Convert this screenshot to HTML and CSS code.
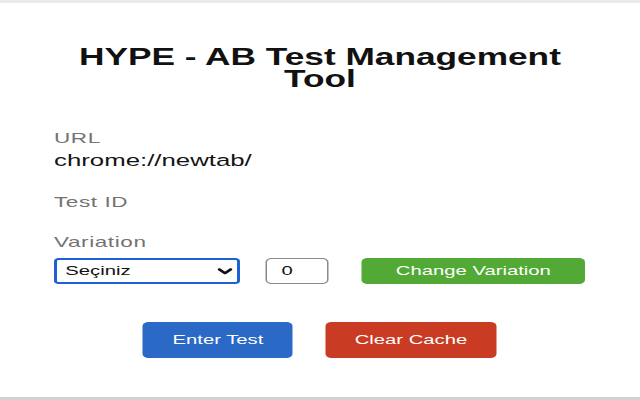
FILE: index.html
```html
<!DOCTYPE html>
<html lang="tr">
<head>
<meta charset="utf-8">
<title>HYPE - AB Test Management Tool</title>
<link rel="stylesheet" href="styles.css">
</head>
<body>
<div class="topbar"></div>
<main class="popup">
  <h1 class="title">HYPE - AB Test Management Tool</h1>
  <div class="label label-url">URL</div>
  <div class="value">chrome://newtab/</div>
  <div class="label label-test">Test ID</div>
  <div class="label label-var">Variation</div>
  <div class="var-row">
    <div class="select-box">
      <span class="select-text">Seçiniz</span>
      <svg class="chevron" width="10" height="7" viewBox="0 0 10 7"><path d="M1.2 1.4 L5 5.2 L8.8 1.4" fill="none" stroke="#111" stroke-width="2.2" stroke-linecap="round" stroke-linejoin="round"/></svg>
    </div>
    <div class="num-input">0</div>
    <button class="btn btn-green">Change Variation</button>
  </div>
  <div class="actions">
    <button class="btn btn-blue">Enter Test</button>
    <button class="btn btn-red">Clear Cache</button>
  </div>
</main>
<div class="bottombar"></div>
</body>
</html>
```

FILE: styles.css
```css
html, body {
  margin: 0;
  padding: 0;
  background: #ffffff;
  width: 640px;
  height: 400px;
  overflow: hidden;
  font-family: "Liberation Sans", Arial, sans-serif;
}

.topbar {
  height: 3px;
  background: #e9eaec;
}

.bottombar {
  height: 3px;
  background: #d2d2d2;
}

.popup {
  width: 426.667px;
  height: 394px;
  box-sizing: border-box;
  padding: 0 36px;
  transform: scaleX(1.5);
  transform-origin: 0 0;
  display: flex;
  flex-direction: column;
}

.title {
  margin: 43.4px 0 0;
  font-size: 23.5px;
  line-height: 22px;
  font-weight: 700;
  text-align: center;
  color: #111111;
}

.label {
  font-size: 15px;
  line-height: 20px;
  letter-spacing: 0.4px;
  color: #737373;
}

.label-url { margin-top: 37.6px; }
.label-test { margin-top: 22px; }
.label-var { margin-top: 20px; }

.value {
  margin-top: 2px;
  font-size: 17.2px;
  line-height: 20px;
  color: #141414;
}

.var-row {
  margin-top: 6px;
  height: 26px;
  display: flex;
  align-items: stretch;
}

.select-box {
  width: 124px;
  box-sizing: border-box;
  border: 2px solid #1c62d6;
  border-radius: 3px;
  display: flex;
  align-items: center;
  justify-content: space-between;
  padding: 0 3.5px 0 5.5px;
  font-size: 13.5px;
  color: #111;
}

.chevron {
  display: block;
  margin-top: 1px;
}

.num-input {
  width: 42.7px;
  margin-left: 16.7px;
  box-sizing: border-box;
  border: 1px solid #8a8a8a;
  border-radius: 4px;
  display: flex;
  align-items: center;
  padding-left: 10px;
  font-size: 13.5px;
  color: #111;
}

.btn {
  border: none;
  margin: 0;
  padding: 0;
  color: #ffffff;
  font-family: "Liberation Sans", Arial, sans-serif;
  font-size: 13.5px;
  border-radius: 4px;
  cursor: pointer;
}

.btn-green {
  width: 149px;
  margin-left: 21.7px;
  background: #52a935;
}

.actions {
  margin-top: 38px;
  display: flex;
  justify-content: center;
  gap: 21.3px;
}

.actions .btn {
  height: 36px;
}

.btn-blue {
  width: 100px;
  background: #2a69c6;
}

.btn-red {
  width: 114.7px;
  background: #c93b22;
}
```
